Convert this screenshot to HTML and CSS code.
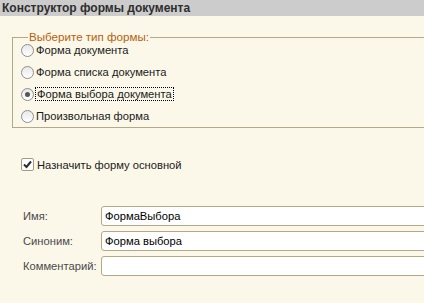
FILE: index.html
```html
<!DOCTYPE html>
<html lang="ru">
<head>
  <meta charset="UTF-8">
  <title>Конструктор формы документа</title>
  <link rel="stylesheet" href="styles.css">
</head>
<body>
  <div class="titlebar">Конструктор формы документа</div>
  <div class="content">
    <fieldset class="group">
      <legend>Выберите тип формы:</legend>
      <div class="option"><span class="radio"></span><span>Форма документа</span></div>
      <div class="option"><span class="radio"></span><span>Форма списка документа</span></div>
      <div class="option"><span class="radio checked"></span><span class="focus">Форма выбора документа</span></div>
      <div class="option"><span class="radio"></span><span>Произвольная форма</span></div>
    </fieldset>

    <div class="check-row">
      <span class="checkbox">
        <svg width="9" height="9" viewBox="0 0 9 9"><path d="M1 4.5 L3.5 7 L8 1.5" fill="none" stroke="#2b2b2b" stroke-width="2"/></svg>
      </span>
      <span>Назначить форму основной</span>
    </div>

    <div class="fields">
      <label>Имя:</label>
      <div class="input">ФормаВыбора</div>
      <label>Синоним:</label>
      <div class="input">Форма выбора</div>
      <label>Комментарий:</label>
      <div class="input"></div>
    </div>
  </div>
</body>
</html>
```

FILE: styles.css
```css
body {
  margin: 0;
  background-color: #fbf8e9;
  font-family: "Liberation Sans", Arial, sans-serif;
  font-size: 11.2px;
  color: #1a1a1a;
  overflow: hidden;
}
.titlebar {
  height: 16px;
  line-height: 16px;
  background-color: #cccccc;
  padding-left: 2px;
  font-size: 12px;
  font-weight: bold;
  color: #2e2e2e;
}
.content {
  padding-top: 14px;
}
.group {
  margin: 0 -20px 0 12px;
  padding: 0 0 0 8px;
  border: 1px solid #b3a987;
}
.group legend {
  padding: 0 1px;
  margin-left: 7px;
  margin-bottom: -5px;
  line-height: 14px;
  font-size: 11.6px;
  color: #b8600e;
}
.option {
  display: flex;
  align-items: center;
  height: 22px;
}
.radio {
  width: 11px;
  height: 11px;
  border: 1px solid #8e8e8e;
  border-radius: 50%;
  background: linear-gradient(#e8e8e8, #ffffff);
  margin-right: 2px;
  display: flex;
  align-items: center;
  justify-content: center;
}
.radio.checked::after {
  content: "";
  width: 5px;
  height: 5px;
  border-radius: 50%;
  background: #555;
}
.focus {
  outline: 1px dotted #000;
  padding: 0 1px;
}
.check-row {
  display: flex;
  align-items: center;
  margin: 30px 0 0 21px;
}
.checkbox {
  width: 11px;
  height: 11px;
  border: 1px solid #a69c7c;
  border-radius: 2px;
  background: #fff;
  margin-right: 3px;
  display: flex;
  align-items: center;
  justify-content: center;
}
.fields {
  display: grid;
  grid-template-columns: 78px 1fr;
  row-gap: 5px;
  margin: 35px -10px 0 23px;
  align-items: center;
}
.fields label {
  color: #4a4a4a;
}
.input {
  height: 18px;
  line-height: 18px;
  border: 1px solid #b3a987;
  border-radius: 3px;
  background: #fff;
  padding-left: 3px;
  color: #000;
}
```
